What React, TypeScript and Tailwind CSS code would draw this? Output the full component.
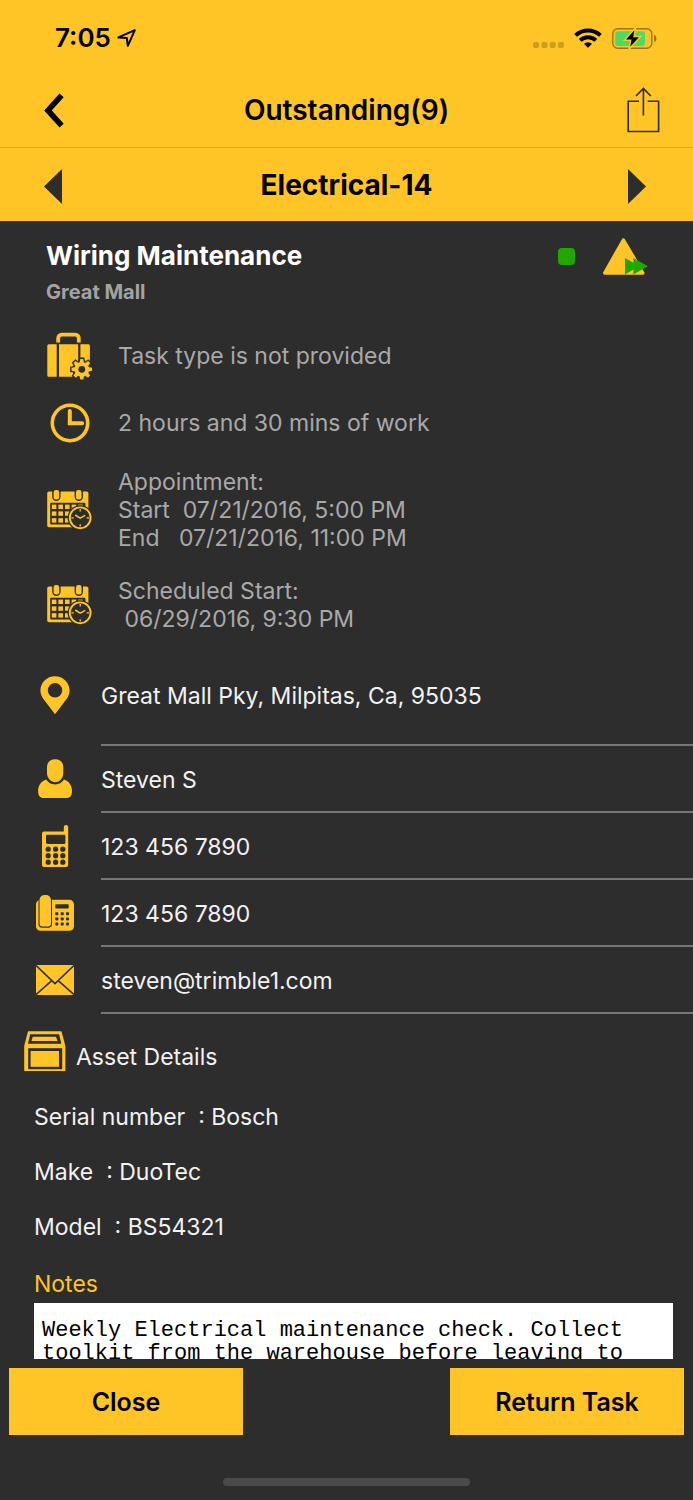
import React from 'react'

interface DetailRowProps {
  icon: React.ReactNode
  className?: string
  children: React.ReactNode
}

interface ContactRowProps {
  icon: React.ReactNode
  className?: string
  href?: string
  children: React.ReactNode
}

const assets = [
  { id: 'serial', text: 'Serial number  : Bosch' },
  { id: 'make', text: 'Make  : DuoTec' },
  { id: 'model', text: 'Model  : BS54321' },
]

const notes = 'Weekly Electrical maintenance check. Collect toolkit from the warehouse before leaving to'

/* Icons */

function LocationArrow() {
  return (
    <svg width="19" height="18" viewBox="0 0 19 18" fill="none" stroke="#000" strokeWidth="2" strokeLinejoin="round">
      <path d="M1.4 8.4 17.800 1.200 10.800 16.800 9.800 9Z" />
    </svg>
  )
}

function SignalDots() {
  return (
    <svg width="31" height="20" viewBox="0 0 31 20" fill="#cc9d1e">
      <rect x="0" y="14" width="6" height="6" rx="2" />
      <rect x="8.5" y="14" width="6" height="6" rx="2" />
      <rect x="16.7" y="14" width="6" height="6" rx="2" />
      <rect x="25" y="14" width="6" height="6" rx="2" />
    </svg>
  )
}

function Wifi() {
  return (
    <svg width="28" height="20" viewBox="0 0 28 20">
      <g fill="none" stroke="#000" strokeWidth="4">
        <path d="M1.6 7.4a18 18 0 0 1 24.800 0" />
        <path d="M6.200 12.400a11.500 11.500 0 0 1 15.600 0" />
      </g>
      <path d="M14 19.8 10 15.8a5.8 5.8 0 0 1 8 0Z" />
    </svg>
  )
}

function Battery() {
  return (
    <svg width="45" height="21" viewBox="0 0 45 21">
      <rect x="0.8" y="0.8" width="39" height="19.4" rx="5" fill="none" stroke="#997617" strokeWidth="1.4" />
      <path d="M42 6.8c3.2 1.2 3.2 6.2 0 7.4Z" fill="#997617" />
      <rect x="3.2" y="3.3" width="29.8" height="14.6" rx="2.8" fill="#4cd964" />
      <path d="M22.4 2.200 14 11.6h5.500L18.200 18.800 27 9.3h-5.800Z" fill="#000" stroke="#ffc426" strokeWidth="3" paintOrder="stroke" />
    </svg>
  )
}

function BackChevron() {
  return (
    <svg width="20" height="35" viewBox="0 0 20 35" fill="none" stroke="#000" strokeWidth="5.6">
      <path d="M17.6 2.4 4 17.4 17.6 32.6" />
    </svg>
  )
}

function Share() {
  return (
    <svg width="33" height="46" viewBox="0 0 33 46" fill="none" stroke="#2d2d2d" strokeWidth="1.6">
      <path d="M12 14.3H1.2v30.2h30.4V14.3H20.6" />
      <path d="M16.4 28.6V1.6M9 9l7.4-7.6L23.8 9" />
    </svg>
  )
}

function Triangle({ d }: { d: string }) {
  return (
    <svg width="18" height="35" viewBox="0 0 18 35" fill="#2d2d2d">
      <path d={d} />
    </svg>
  )
}

function Priority() {
  return (
    <svg width="45" height="37" viewBox="0 0 45 37">
      <path d="M20.4 2 39.8 35H1.7Z" fill="#ffc426" stroke="#ffc426" strokeWidth="3.4" strokeLinejoin="round" />
      <path d="M22 20v16.4l8.4-4.8v4.8L45 28.2 30.4 20v4.8Z" fill="#21a800" />
    </svg>
  )
}

function Briefcase() {
  const teeth = [0, 45, 90, 135, 180, 225, 270, 315]
  return (
    <svg width="46" height="48" viewBox="0 0 46 48" fill="#ffc426">
      <path d="M11.2 10.5V6.2a3.6 3.6 0 0 1 3.6-3.6h13.4a3.6 3.6 0 0 1 3.6 3.6v4.3" fill="none" stroke="#ffc426" strokeWidth="3.8" />
      <path d="M1.8 12.3h7.9v32.5H1.8A1.5 1.5 0 0 1 .3 43.3V13.8a1.5 1.5 0 0 1 1.5-1.5ZM12 12.3h19.2v32.5H12ZM33.4 12.3h8a1.5 1.5 0 0 1 1.5 1.5v31h-9.5Z" />
      <g fill="#2d2d2d" stroke="#2d2d2d" strokeWidth="2.8">
        <circle cx="34.8" cy="37.3" r="8" />
        {teeth.map((a) => (
          <path key={a} d="M32.8 30.5 33.4 27h2.8l.6 3.5Z" transform={`rotate(${a} 34.8 37.3)`} />
        ))}
      </g>
      <circle cx="34.8" cy="37.3" r="5.4" fill="none" stroke="#ffc426" strokeWidth="4" />
      {teeth.map((a) => (
        <path key={a} d="M32.6 31 33.3 27h3l.7 4Z" transform={`rotate(${a} 34.8 37.3)`} />
      ))}
    </svg>
  )
}

function Clock() {
  return (
    <svg width="40" height="40" viewBox="0 0 40 40" fill="none" stroke="#ffc426" strokeWidth="3.6">
      <circle cx="20" cy="20" r="17.7" />
      <path d="M19.8 8v12.2h12.4" strokeWidth="4" strokeLinecap="round" />
    </svg>
  )
}

function Calendar() {
  const cols = [4.8, 11.4, 18, 24.6, 31.2]
  const rows = [14.6, 21.4, 28.2]
  return (
    <svg width="46" height="40" viewBox="0 0 46 40" fill="#ffc426">
      <rect x="0.2" y="1.4" width="41.2" height="35.8" rx="1.8" />
      <rect x="3.2" y="12.8" width="35.2" height="21.6" rx="1" fill="#2d2d2d" />
      {rows.map((y) => cols.map((x) => <rect key={`${x}-${y}`} x={x} y={y} width="4.6" height="4.4" />))}
      {[9.4, 31.8].map((x) => (
        <g key={x}>
          <path d={`M${x - 4.2} 0v6.8a4.2 4.2 0 0 0 8.4 0V0Z`} fill="#2d2d2d" />
          <rect x={x - 2.8} y="0" width="5.6" height="9.6" rx="2.4" />
        </g>
      ))}
      <circle cx="33.2" cy="27.8" r="12.6" fill="#2d2d2d" />
      <g fill="none" stroke="#ffc426">
        <circle cx="33.2" cy="27.8" r="10.4" strokeWidth="1.9" />
        <path d="m28.2 25 5 3.2 5-2.8" strokeWidth="1.5" />
        <path d="M33.2 19v2.4M33.2 34.2v2.4M24.4 27.8h2.4M39.6 27.8H42" strokeWidth="1.3" />
      </g>
    </svg>
  )
}

function Pin() {
  return (
    <svg width="30" height="38" viewBox="0 0 30 38" fill="#ffc426">
      <path fillRule="evenodd" d="M15 .2C6.8.2.4 6.6.4 14.5c0 3.5 1.3 6.2 3.4 9L15 38.2 26.2 23.5c2.1-2.8 3.4-5.5 3.4-9C29.6 6.6 23.2.2 15 .2Zm0 6.900a7.200 7.200 0 1 1 0 14.400 7.200 7.200 0 0 1 0-14.400Z" />
    </svg>
  )
}

function Person() {
  return (
    <svg width="34" height="39" viewBox="0 0 34 39" fill="#ffc426">
      <path d="M17.2.2c5 0 8.1 2.9 8.1 8.3v5.6c0 5-3.6 9.2-8.1 9.2S9 19.1 9 14.1V8.5C9 3.100 12.100.2 17.200.2Z" />
      <path d="M8.2 20.6c2 3.2 5 4.9 8.9 4.9s6.9-1.7 8.9-4.900c4.900 1.600 8 5.800 8 11.400 0 4.600-1.700 7-5.800 7H5.900C1.800 39 .1 36.600.1 32c0-5.600 3.200-9.800 8.100-11.400Z" />
    </svg>
  )
}

function Mobile() {
  const xs = [6.2, 13.6, 20.8]
  const ys = [24.2, 30.7, 37.2]
  return (
    <svg width="27" height="42" viewBox="0 0 27 42" fill="#ffc426">
      <path d="M2 6.6h19.8V2.3a2.2 2.2 0 0 1 4.4 0V40a2 2 0 0 1-2 2H2a2 2 0 0 1-2-2V8.600a2 2 0 0 1 2-2Z" />
      <rect x="4" y="9.7" width="19.4" height="9.2" rx="1.4" fill="#2d2d2d" />
      {ys.map((y) => xs.map((x) => <circle key={`${x}-${y}`} cx={x} cy={y} r="2.6" fill="#2d2d2d" />))}
    </svg>
  )
}

function DeskPhone() {
  const xs = [19.3, 24.7, 30]
  const ys = [17.2, 22.4, 27.6]
  return (
    <svg width="38" height="36" viewBox="0 0 38 36" fill="#ffc426">
      <rect x="0" y="4.8" width="38" height="31" rx="4.6" />
      <path d="M2.5 2H16v27a3.8 3.8 0 0 1-3.8 3.8H6.3A3.8 3.8 0 0 1 2.5 29Z" fill="#2d2d2d" />
      <path d="M3.5 5a5 5 0 0 1 5-5H10a5 5 0 0 1 5 5v23.500a3 3 0 0 1-3 3H6.500a3 3 0 0 1-3-3Z" />
      <rect x="19.3" y="9.2" width="13.4" height="4.3" rx="0.8" fill="#2d2d2d" />
      {ys.map((y) => xs.map((x) => <rect key={`${x}-${y}`} x={x} y={y} width="3" height="3" rx="0.8" fill="#2d2d2d" />))}
    </svg>
  )
}

function Mail() {
  return (
    <svg width="38" height="30" viewBox="0 0 38 30">
      <rect width="38" height="30" fill="#ffc426" />
      <g fill="none" stroke="#2d2d2d" strokeWidth="1.5">
        <path d="M0 .4 19 18.6 38 .4" />
        <path d="M0 29.6 15.8 15.6M38 29.6 22.2 15.6" />
      </g>
    </svg>
  )
}

function AssetBox() {
  return (
    <svg width="42" height="40" viewBox="0 0 42 40">
      <path d="M4 .2h33.4L41.400 15v25H.2V15Z" fill="#ffc426" />
      <path d="M6.2 3.3h28.9l2.2 9.4H4Z" fill="#2d2d2d" />
      <path d="M8.7 5.8h23.2l1.8 4.3H7.5Z" fill="#ffc426" />
      <rect x="4.2" y="17.2" width="34" height="21" fill="#2d2d2d" />
      <rect x="6.6" y="20" width="28.4" height="15.8" fill="#ffc426" />
    </svg>
  )
}

/* Rows */

function DetailRow({ icon, className = '', children }: DetailRowProps) {
  return (
    <li className={`flex items-center gap-[25px] ${className}`}>
      <span className="flex w-[46px] shrink-0 justify-center">{icon}</span>
      <div className="whitespace-pre-wrap">{children}</div>
    </li>
  )
}

function ContactRow({ icon, className = 'h-[67px]', href, children }: ContactRowProps) {
  return (
    <li className={`flex gap-[26px] pl-[35px] ${className}`}>
      <span className="flex w-10 shrink-0 items-center justify-center pb-0.5">{icon}</span>
      <div className="flex flex-1 items-center border-b-2 border-[#777777] pt-0.5">
        {href ? <a href={href}>{children}</a> : children}
      </div>
    </li>
  )
}

export default function App() {
  return (
    <div className="flex min-h-screen flex-col bg-[#2d2d2d] font-['Inter',sans-serif] text-[23px] leading-7 text-[#f2f2f2]">
      <header className="bg-[#ffc426] text-black">
        {/* Status bar */}
        <div className="flex h-[76px] items-center justify-between pl-[55px] pr-9">
          <div className="flex items-center gap-1.5">
            <span className="text-[26px] font-semibold">7:05</span>
            <LocationArrow />
          </div>
          <div className="flex items-center gap-2.5">
            <SignalDots />
            <Wifi />
            <Battery />
          </div>
        </div>

        {/* Nav bar */}
        <div className="grid h-[72px] grid-cols-[1fr_auto_1fr] items-center border-b border-[#d9a828] px-[33px] pb-[3px]">
          <button type="button" aria-label="Back" className="justify-self-start pl-[11px]"><BackChevron /></button>
          <h1 className="text-[28px] font-semibold">Outstanding(9)</h1>
          <button type="button" aria-label="Share" className="justify-self-end"><Share /></button>
        </div>

        {/* Task switcher */}
        <div className="grid h-[73px] grid-cols-[1fr_auto_1fr] items-center px-11">
          <button type="button" aria-label="Previous task" className="justify-self-start pt-[3px]"><Triangle d="M18 0v35L0 17.5Z" /></button>
          <h2 className="text-[28px] font-bold">Electrical-14</h2>
          <button type="button" aria-label="Next task" className="justify-self-end pr-[3px] pt-[3px]"><Triangle d="M0 0v35l18-17.5Z" /></button>
        </div>
      </header>

      <main>
        <section className="pl-[46px] pr-[45px] pt-4">
          <div className="flex h-[38px] items-center justify-between">
            <h3 className="text-[26px] font-bold text-white">Wiring Maintenance</h3>
            <div className="flex items-center gap-7">
              <span className="size-[17px] rounded bg-[#21a800]" />
              <Priority />
            </div>
          </div>
          <p className="mt-[3px] text-[20px] font-bold text-[#a3a3a3]">Great Mall</p>
        </section>

        <ul className="pb-3 pl-[47px] pt-4 text-[#a9a9a9]">
          <DetailRow icon={<Briefcase />} className="h-[67px]">Task type is not provided</DetailRow>
          <DetailRow icon={<Clock />} className="h-[67px]">2 hours and 30 mins of work</DetailRow>
          <DetailRow icon={<Calendar />} className="pt-3">
            <p>Appointment:</p>
            <p>{'Start  07/21/2016, 5:00 PM'}</p>
            <p>{'End   07/21/2016, 11:00 PM'}</p>
          </DetailRow>
          <DetailRow icon={<Calendar />} className="pt-[25px]">
            <p>Scheduled Start:</p>
            <p>{' 06/29/2016, 9:30 PM'}</p>
          </DetailRow>
        </ul>

        <ul>
          <ContactRow icon={<Pin />} className="h-[101px]">Great Mall Pky, Milpitas, Ca, 95035</ContactRow>
          <ContactRow icon={<Person />}>Steven S</ContactRow>
          <ContactRow icon={<Mobile />} href="tel:1234567890">123 456 7890</ContactRow>
          <ContactRow icon={<DeskPhone />} href="tel:1234567890">123 456 7890</ContactRow>
          <ContactRow icon={<Mail />} href="mailto:steven@trimble1.com">steven@trimble1.com</ContactRow>
        </ul>

        <section className="pt-[17px]">
          <div className="flex items-end gap-2.5 pl-6">
            <AssetBox />
            <h3>Asset Details</h3>
          </div>
          <ul className="pl-[34px] pt-[18px]">
            {assets.map((a) => (
              <li key={a.id} className="flex h-[55px] items-center whitespace-pre">{a.text}</li>
            ))}
          </ul>
        </section>

        <section className="pl-[34px] pr-5 pt-3">
          <label htmlFor="notes" className="flex h-[37px] items-center pb-0.5 text-[#ffc426]">Notes</label>
          <textarea
            id="notes"
            readOnly
            defaultValue={notes}
            className="block h-14 w-full resize-none overflow-hidden bg-white px-2 pt-4 font-['Liberation_Mono',monospace] text-[22px] leading-[23px] text-black outline-none"
          />
        </section>
      </main>

      <footer className="px-[9px] pb-3.5 pt-[9px]">
        <div className="flex justify-between text-[25px] font-semibold text-black">
          <button type="button" className="h-[67px] w-[234px] bg-[#ffc426]">Close</button>
          <button type="button" className="h-[67px] w-[234px] bg-[#ffc426]">Return Task</button>
        </div>
        <div className="mx-auto mt-[43px] h-2 w-[247px] rounded-full bg-[#4a4a4a]" />
      </footer>
    </div>
  )
}
